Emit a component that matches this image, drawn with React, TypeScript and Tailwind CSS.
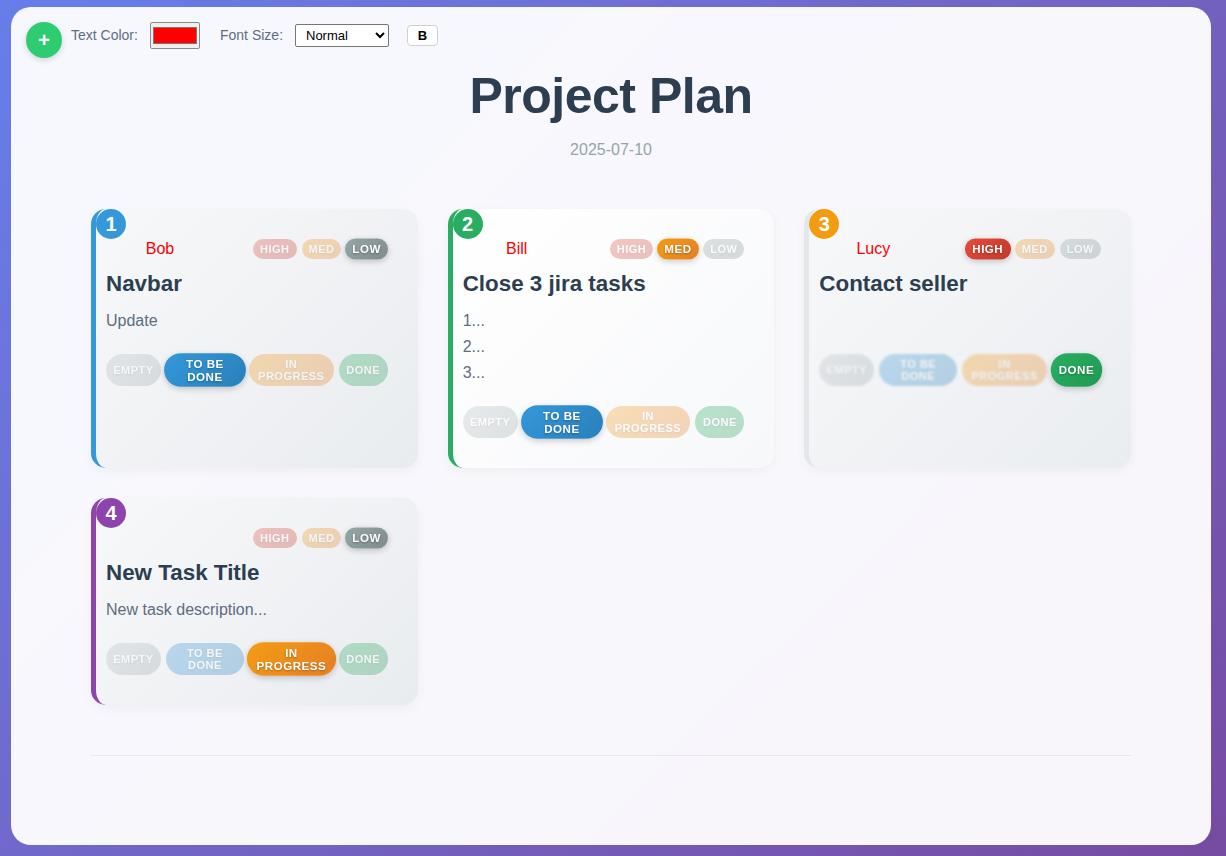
import React from "react";

type Priority = "high" | "med" | "low";
type Status = "empty" | "todo" | "progress" | "done";

const tasks: {
  n: number;
  name: string;
  title: string;
  desc: string[];
  priority: Priority;
  status: Status;
  badge: string;
  border: string;
  bg: string;
}[] = [
  {
    n: 1,
    name: "Bob",
    title: "Navbar",
    desc: ["Update"],
    priority: "low",
    status: "todo",
    badge: "bg-[#3498db]",
    border: "border-l-[#3498db]",
    bg: "bg-linear-135 from-[#f7f8fa] to-[#e9ecef]",
  },
  {
    n: 2,
    name: "Bill",
    title: "Close 3 jira tasks",
    desc: ["1...", "2...", "3..."],
    priority: "med",
    status: "todo",
    badge: "bg-[#27ae60]",
    border: "border-l-[#27ae60]",
    bg: "bg-linear-135 from-white to-[#f7f8fa]",
  },
  {
    n: 3,
    name: "Lucy",
    title: "Contact seller",
    desc: [],
    priority: "high",
    status: "done",
    badge: "bg-[#f39c12]",
    border: "border-l-[#e4e7ea]",
    bg: "bg-linear-135 from-[#f7f8fa] to-[#eaedf0]",
  },
  {
    n: 4,
    name: "",
    title: "New Task Title",
    desc: ["New task description..."],
    priority: "low",
    status: "progress",
    badge: "bg-[#8e44ad]",
    border: "border-l-[#8e44ad]",
    bg: "bg-linear-135 from-[#f7f8fa] to-[#e9ecef]",
  },
];

const priorities: { key: Priority; label: string; color: string }[] = [
  { key: "high", label: "HIGH", color: "bg-linear-135 from-[#e74c3c] to-[#c0392b]" },
  { key: "med", label: "MED", color: "bg-linear-135 from-[#f39c12] to-[#e67e22]" },
  { key: "low", label: "LOW", color: "bg-linear-135 from-[#95a5a6] to-[#7f8c8d]" },
];

const statuses: { key: Status; label: string; color: string; w: string }[] = [
  { key: "empty", label: "EMPTY", color: "bg-linear-135 from-[#bdc3c7] to-[#95a5a6]", w: "w-[55px]" },
  { key: "todo", label: "TO BE DONE", color: "bg-linear-135 from-[#3498db] to-[#2980b9]", w: "w-[78px]" },
  { key: "progress", label: "IN PROGRESS", color: "bg-linear-135 from-[#f39c12] to-[#e67e22]", w: "w-[85px]" },
  { key: "done", label: "DONE", color: "bg-linear-135 from-[#27ae60] to-[#229954]", w: "w-[49px]" },
];

const shadowText = "[text-shadow:0_1px_2px_rgba(0,0,0,0.3)]";

function Card({ t }: { t: (typeof tasks)[number] }) {
  const faded = t.status === "done";
  return (
    <div
      className={`relative rounded-[15px] border-l-[5px] ${t.border} ${t.bg} pl-[10px] pr-[30px] pt-[30px] pb-[30px] shadow-[0_4px_12px_rgba(0,0,0,0.04)]`}
    >
      <div
        className={`absolute left-0 top-0 flex h-[30px] w-[30px] items-center justify-center rounded-full ${t.badge} text-[20px] font-bold text-white`}
      >
        {t.n}
      </div>
      <div className="flex h-[20px] items-center">
        <div className="ml-[14px] w-[80px] text-center text-[16px] text-[#ff0000]">{t.name}</div>
        <div className="ml-auto flex gap-[5px]">
          {priorities.map((p) => {
            const on = p.key === t.priority;
            return (
              <span
                key={p.key}
                className={`rounded-full ${p.color} px-[7px] py-[4px] text-[11px] leading-[12px] font-bold tracking-[0.5px] text-white ${shadowText} ${
                  on ? "scale-105 shadow-[0_2px_6px_rgba(0,0,0,0.2)]" : "opacity-30"
                }`}
              >
                {p.label}
              </span>
            );
          })}
        </div>
      </div>
      <h3 className="mt-[12px] text-[22.4px] leading-[1.2] font-bold text-[#2c3e50]">{t.title}</h3>
      <div className="mt-[10px] min-h-[26px] text-[16px] leading-[26px] text-[#5d6d7e]">
        {t.desc.map((d) => (
          <div key={d}>{d}</div>
        ))}
      </div>
      <div className="mt-[20px] flex gap-[5px]">
        {statuses.map((s) => {
          const on = s.key === t.status;
          return (
            <span
              key={s.key}
              className={`flex h-[32px] ${s.w} items-center justify-center rounded-full ${s.color} px-[4px] py-[4px] text-center text-[11px] leading-[12px] font-bold tracking-[0.5px] text-white ${shadowText} ${
                on ? "scale-105 shadow-[0_2px_6px_rgba(0,0,0,0.2)]" : faded ? "opacity-30 blur-[1px]" : "opacity-30"
              }`}
            >
              {s.label}
            </span>
          );
        })}
      </div>
    </div>
  );
}

export default function App() {
  return (
    <div className="h-[856px] w-full overflow-hidden bg-linear-135 from-[#667eea] to-[#764ba2] pt-[7px] pl-[11px] font-['Liberation_Sans',Arial,sans-serif]">
      <div className="h-[838px] w-[1200px] rounded-[20px] bg-white/95 px-[15px] pt-[15px]">
        <div className="flex items-start">
          <button className="flex h-[36px] w-[36px] items-center justify-center rounded-full bg-[#2ecc71] text-[20px] leading-none font-bold text-white shadow-[0_2px_6px_rgba(0,0,0,0.15)]">
            +
          </button>
          <div className="ml-[9px] flex h-[27px] items-center text-[14px] text-[#5d6d7e]">
            <span className="w-[70px]">Text Color:</span>
            <div className="ml-[9px] h-[27px] w-[50px] rounded-[2px] border border-[#8a8a8a] bg-[#efefef] px-[2px] py-[4px]">
              <div className="h-full w-full border border-[#777] bg-[#ff0000]" />
            </div>
            <span className="ml-[20px] w-[64px]">Font Size:</span>
            <select
              defaultValue="normal"
              className="ml-[11px] h-[23px] w-[94px] rounded-[2px] border border-[#767676] bg-white pl-[6px] text-[13px] text-black"
            >
              <option value="small">Small</option>
              <option value="normal">Normal</option>
              <option value="large">Large</option>
            </select>
            <button className="ml-[18px] flex h-[21px] w-[31px] items-center justify-center rounded-[4px] border border-[#d0d0d0] bg-white text-[13px] font-bold text-black">
              B
            </button>
          </div>
        </div>

        <h1 className="mt-[8px] text-center text-[50px] leading-[1.2] font-bold tracking-[-0.5px] text-[#2c3e50]">
          Project Plan
        </h1>
        <div className="mt-[12px] text-center text-[16px] leading-[24px] text-[#95a5a6]">2025-07-10</div>

        <div className="mx-[65px] mt-[47px] grid grid-cols-3 gap-[30px]">
          {tasks.map((t) => (
            <Card key={t.n} t={t} />
          ))}
        </div>

        <div className="mx-[65px] mt-[50px] border-t border-[#e3e7eb]" />
      </div>
    </div>
  );
}
